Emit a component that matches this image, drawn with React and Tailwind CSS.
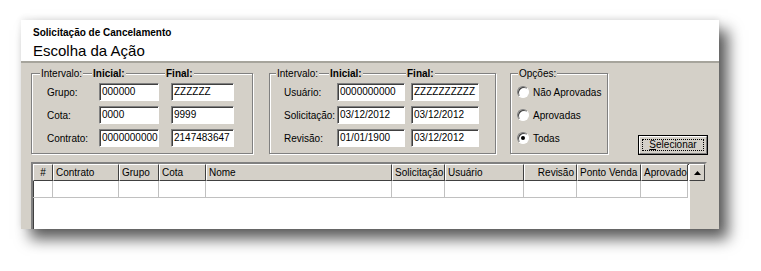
import React from 'react';

const font = { fontFamily: '"Liberation Sans", Arial, sans-serif' };

const Input = ({ value, w }) => (
  <div
    className={`h-[18px] ${w} bg-white border-t border-l border-[#808080] border-b border-r border-b-white border-r-white shadow-[inset_1px_1px_0_#404040] pl-[2px] text-[10px] leading-[16px] text-black overflow-hidden whitespace-nowrap`}
  >
    {value}
  </div>
);

const Legend = ({ children, bold }) => (
  <span className={`bg-[#d4d0c8] px-[1px] text-[10px] leading-[13px] ${bold ? 'font-bold' : ''}`}>
    {children}
  </span>
);

// header slots: [width, text, bold]
const GroupBox = ({ className, slots, children }) => (
  <div className={`border border-[#808080] shadow-[inset_1px_1px_0_#fff,1px_1px_0_#fff] ${className}`}>
    <div className="-mt-[7px] flex items-start h-[13px]">
      {slots.map(([w, text, bold], i) => (
        <div key={i} className={`${w} shrink-0 flex`}>
          {text && <Legend bold={bold}>{text}</Legend>}
        </div>
      ))}
    </div>
    {children}
  </div>
);

const Radio = ({ label, checked }) => (
  <div className="flex items-center h-[12px]">
    <div className="w-[12px] h-[12px] rounded-full bg-white border border-[#808080] border-b-white border-r-white shadow-[inset_1px_1px_0_#404040] flex items-center justify-center">
      {checked && <div className="w-[4px] h-[4px] rounded-full bg-black" />}
    </div>
    <span className="ml-[4px] text-[10px] leading-[13px] whitespace-nowrap">{label}</span>
  </div>
);

const columns = [
  { name: '#', w: 'w-[20px]', align: 'justify-center' },
  { name: 'Contrato', w: 'w-[66px]' },
  { name: 'Grupo', w: 'w-[40px]' },
  { name: 'Cota', w: 'w-[47px]' },
  { name: 'Nome', w: 'w-[186px]' },
  { name: 'Solicitação', w: 'w-[53px]' },
  { name: 'Usuário', w: 'w-[79px]' },
  { name: 'Revisão', w: 'w-[53px]', align: 'justify-end' },
  { name: 'Ponto Venda', w: 'w-[64px]' },
  { name: 'Aprovado', w: 'w-[47px]' },
];

const App = () => {
  return (
    <div className="w-[761px] h-[271px] bg-white overflow-hidden text-black" style={font}>
      <div className="ml-[21px] mt-[20px] w-[698px] h-[209px] flex flex-col shadow-[9px_10px_14px_rgba(0,0,0,0.65),0_-2px_6px_rgba(0,0,0,0.08)]">
        <div className="h-[43px] bg-white border-b-2 border-[#a6a49c] pl-[12px] pt-[7px] shrink-0">
          <p className="text-[10px] font-bold leading-[12px]">Solicitação de Cancelamento</p>
          <p className="text-[15px] leading-[18px] mt-[3px]">Escolha da Ação</p>
        </div>

        <div className="flex-1 bg-[#d4d0c8] pl-[10px] pt-[10px] overflow-hidden">
          <div className="flex items-end">
            <GroupBox
              className="w-[222px] h-[81px]"
              slots={[
                ['w-[8px]'],
                ['w-[52px]', 'Intervalo:'],
                ['w-[73px]', 'Inicial:', true],
                ['w-[40px]', 'Final:', true],
              ]}
            >
              <div className="flex flex-col gap-[5px] mt-[3px]">
                {[
                  ['Grupo:', '000000', 'ZZZZZZ'],
                  ['Cota:', '0000', '9999'],
                  ['Contrato:', '0000000000', '2147483647'],
                ].map(([label, a, b]) => (
                  <div key={label} className="flex items-center">
                    <span className="w-[52px] ml-[15px] text-[10px]">{label}</span>
                    <Input value={a} w="w-[60px]" />
                    <Input value={b} w="w-[63px] ml-[12px]" />
                  </div>
                ))}
              </div>
            </GroupBox>

            <GroupBox
              className="w-[227px] h-[81px] ml-[16px]"
              slots={[
                ['w-[6px]'],
                ['w-[53px]', 'Intervalo:'],
                ['w-[77px]', 'Inicial:', true],
                ['w-[40px]', 'Final:', true],
              ]}
            >
              <div className="flex flex-col gap-[5px] mt-[3px]">
                {[
                  ['Usuário:', '0000000000', 'ZZZZZZZZZZ'],
                  ['Solicitação:', '03/12/2012', '03/12/2012'],
                  ['Revisão:', '01/01/1900', '03/12/2012'],
                ].map(([label, a, b]) => (
                  <div key={label} className="flex items-center">
                    <span className="w-[53px] ml-[14px] text-[10px] whitespace-nowrap">{label}</span>
                    <Input value={a} w="w-[68px]" />
                    <Input value={b} w="w-[68px] ml-[6px]" />
                  </div>
                ))}
              </div>
            </GroupBox>

            <GroupBox
              className="w-[98px] h-[81px] ml-[14px]"
              slots={[
                ['w-[7px]'],
                ['w-[60px]', 'Opções:'],
              ]}
            >
              <div className="flex flex-col gap-[11px] pl-[6px] mt-[6px]">
                <Radio label="Não Aprovadas" />
                <Radio label="Aprovadas" />
                <Radio label="Todas" checked />
              </div>
            </GroupBox>

            <div className="ml-[30px] mb-[-1px] w-[70px] h-[20px] border border-black bg-[#d4d0c8]">
              <div className="w-full h-full border border-white border-b-[#808080] border-r-[#808080] p-[2px]">
                <div className="w-full h-full border border-dotted border-black flex items-center justify-center text-[10px] leading-[12px]">
                  <span><span className="underline">S</span>elecionar</span>
                </div>
              </div>
            </div>
          </div>

          <div className="mt-[8px] w-[676px] h-[80px] bg-white border-2 border-[#808080] border-b-white border-r-[#d4d0c8] shadow-[inset_1px_1px_0_#404040] flex">
            <div className="flex flex-col">
              <div className="flex h-[17px]">
                {columns.map((c) => (
                  <div
                    key={c.name}
                    className={`${c.w} shrink-0 h-full bg-[#d4d0c8] border-t border-l border-white border-r border-b border-r-[#404040] border-b-[#404040] flex items-center px-[2px] text-[10px] whitespace-nowrap overflow-hidden ${c.align || ''}`}
                  >
                    {c.name}
                  </div>
                ))}
              </div>
              <div className="flex h-[17px]">
                {columns.map((c) => (
                  <div key={c.name} className={`${c.w} shrink-0 h-full border-r border-b border-[#c0c0c0]`} />
                ))}
              </div>
            </div>
            <div className="ml-[1px] w-[16px] bg-[#e4e2dc] flex flex-col">
              <div className="h-[17px] w-[16px] bg-[#d4d0c8] border border-white border-b-[#404040] border-r-[#404040] flex items-center justify-center">
                <svg width="7" height="4" viewBox="0 0 7 4">
                  <path d="M3.5 0 L7 4 L0 4 Z" fill="#000" />
                </svg>
              </div>
              <div className="flex-1 border-l border-white bg-[#d4d0c8]" />
            </div>
          </div>
        </div>
      </div>
    </div>
  );
};

export default App;
